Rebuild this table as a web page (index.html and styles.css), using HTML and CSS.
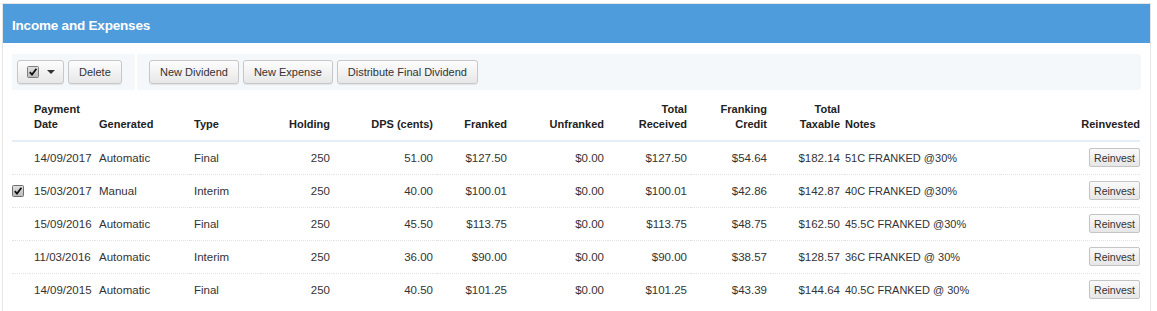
FILE: index.html
```html
<!DOCTYPE html>
<html>
<head>
<meta charset="utf-8">
<link rel="stylesheet" href="styles.css">
</head>
<body>
<div class="panel">
  <div class="panel-heading"><h3 class="panel-title">Income and Expenses</h3></div>
  <div class="panel-body">
    <div class="toolbar">
      <div class="tb-group tb-first">
        <button class="btn btn-check">
          <svg class="cb" width="12" height="12" viewBox="0 0 12 12"><defs><linearGradient id="g1" x1="0" y1="0" x2="0" y2="1"><stop offset="0" stop-color="#e2e2e2"/><stop offset="1" stop-color="#b9b9b9"/></linearGradient></defs><rect x="0.5" y="0.5" width="11" height="11" rx="1" fill="url(#g1)" stroke="#7d7d7d"/><path d="M2.8 6.2 L5 8.6 L9.4 2.8" fill="none" stroke="#111" stroke-width="1.8"/></svg>
          <span class="caret"></span>
        </button>
        <button class="btn">Delete</button>
      </div>
      <div class="tb-sep"></div>
      <div class="tb-group tb-second">
        <button class="btn">New Dividend</button>
        <button class="btn">New Expense</button>
        <button class="btn">Distribute Final Dividend</button>
      </div>
    </div>
    <table class="grid">
      <colgroup>
        <col style="width:18px"><col style="width:65px"><col style="width:95px"><col style="width:70px"><col style="width:74px"><col style="width:103px"><col style="width:74px"><col style="width:97px"><col style="width:83px"><col style="width:80px"><col style="width:73px"><col style="width:156px"><col style="width:140px">
      </colgroup>
      <thead>
        <tr>
          <th class="c-cb"></th>
          <th class="l">Payment<br>Date</th>
          <th class="l">Generated</th>
          <th class="l">Type</th>
          <th class="r">Holding</th>
          <th class="r">DPS (cents)</th>
          <th class="r">Franked</th>
          <th class="r">Unfranked</th>
          <th class="r">Total<br>Received</th>
          <th class="r">Franking<br>Credit</th>
          <th class="r">Total<br>Taxable</th>
          <th class="l notes">Notes</th>
          <th class="r last">Reinvested</th>
        </tr>
      </thead>
      <tbody>
        <tr>
          <td class="c-cb"></td>
          <td>14/09/2017</td><td>Automatic</td><td>Final</td>
          <td class="r">250</td><td class="r">51.00</td><td class="r">$127.50</td><td class="r">$0.00</td><td class="r">$127.50</td><td class="r">$54.64</td><td class="r">$182.14</td>
          <td class="notes">51C FRANKED @30%</td>
          <td class="r last"><button class="btn-sm">Reinvest</button></td>
        </tr>
        <tr>
          <td class="c-cb"><svg class="cb" width="12" height="12" viewBox="0 0 12 12"><defs><linearGradient id="g2" x1="0" y1="0" x2="0" y2="1"><stop offset="0" stop-color="#e2e2e2"/><stop offset="1" stop-color="#b9b9b9"/></linearGradient></defs><rect x="0.5" y="0.5" width="11" height="11" rx="1" fill="url(#g2)" stroke="#6f6f6f"/><path d="M2.8 6.2 L5 8.6 L9.4 2.8" fill="none" stroke="#111" stroke-width="1.8"/></svg></td>
          <td>15/03/2017</td><td>Manual</td><td>Interim</td>
          <td class="r">250</td><td class="r">40.00</td><td class="r">$100.01</td><td class="r">$0.00</td><td class="r">$100.01</td><td class="r">$42.86</td><td class="r">$142.87</td>
          <td class="notes">40C FRANKED @30%</td>
          <td class="r last"><button class="btn-sm">Reinvest</button></td>
        </tr>
        <tr>
          <td class="c-cb"></td>
          <td>15/09/2016</td><td>Automatic</td><td>Final</td>
          <td class="r">250</td><td class="r">45.50</td><td class="r">$113.75</td><td class="r">$0.00</td><td class="r">$113.75</td><td class="r">$48.75</td><td class="r">$162.50</td>
          <td class="notes">45.5C FRANKED @30%</td>
          <td class="r last"><button class="btn-sm">Reinvest</button></td>
        </tr>
        <tr>
          <td class="c-cb"></td>
          <td>11/03/2016</td><td>Automatic</td><td>Interim</td>
          <td class="r">250</td><td class="r">36.00</td><td class="r">$90.00</td><td class="r">$0.00</td><td class="r">$90.00</td><td class="r">$38.57</td><td class="r">$128.57</td>
          <td class="notes">36C FRANKED @ 30%</td>
          <td class="r last"><button class="btn-sm">Reinvest</button></td>
        </tr>
        <tr>
          <td class="c-cb"></td>
          <td>14/09/2015</td><td>Automatic</td><td>Final</td>
          <td class="r">250</td><td class="r">40.50</td><td class="r">$101.25</td><td class="r">$0.00</td><td class="r">$101.25</td><td class="r">$43.39</td><td class="r">$144.64</td>
          <td class="notes">40.5C FRANKED @ 30%</td>
          <td class="r last"><button class="btn-sm">Reinvest</button></td>
        </tr>
      </tbody>
    </table>
  </div>
</div>
</body>
</html>
```

FILE: styles.css
```css
* { box-sizing: border-box; }
html, body { margin: 0; padding: 0; background: #fff; }
body {
  font-family: "Liberation Sans", Arial, sans-serif;
  font-size: 11.5px;
  color: #333;
}
.panel {
  margin: 3px 6px 0 2px;
  border: 1px solid #e6e6e6;
  border-bottom: none;
  min-height: 320px;
}
.panel-heading {
  background: #4f9cdc;
  height: 39px;
  padding: 3px 9px 0 9px;
  display: flex;
  align-items: center;
}
.panel-title {
  margin: 0;
  color: #fff;
  font-size: 13.5px;
  font-weight: bold;
  letter-spacing: -0.2px;
}
.panel-body {
  padding: 10px 9px 0 9px;
}
.toolbar {
  display: flex;
  height: 36px;
  margin-top: 1px;
}
.tb-group {
  display: flex;
  gap: 4px;
  align-items: center;
  background: #f4f8fb;
  height: 36px;
}
.tb-first { width: 123px; padding-left: 5px; }
.tb-sep { width: 2px; background: #fff; }
.tb-second { flex: 1; padding-left: 12px; border-radius: 0 3px 3px 0; }
.btn {
  font-family: inherit;
  font-size: 11px;
  color: #333;
  height: 24px;
  padding: 0 10px;
  border: 1px solid #c8c8c8;
  border-radius: 3px;
  background: linear-gradient(#fdfdfd, #e7e7e7);
  box-shadow: 0 1px 1px rgba(0,0,0,0.08);
  display: inline-flex;
  align-items: center;
}
.btn-check { width: 47px; padding: 0 0 0 9px; gap: 8px; }
.btn-check .cb { display: block; }
.caret {
  width: 0; height: 0;
  border-left: 4px solid transparent;
  border-right: 4px solid transparent;
  border-top: 4px solid #333;
}
.grid {
  border-collapse: collapse;
  table-layout: fixed;
  width: 1128px;
  margin-top: 6px;
}
.grid th {
  font-size: 11px;
  font-weight: bold;
  color: #222;
  line-height: 15px;
  vertical-align: bottom;
  padding: 0 4px 8px 4px;
  height: 45px;
  border-bottom: 2px solid #e4eef8;
  white-space: nowrap;
}
.grid td {
  height: 33px;
  padding: 0 4px;
  vertical-align: middle;
  border-bottom: 1px dotted #e2e2e2;
  white-space: nowrap;
}
.grid tbody tr:last-child td { border-bottom: none; }
.l { text-align: left; }
.r { text-align: right; }
.grid .c-cb { padding: 0; }
.grid td.c-cb .cb { display: block; margin-top: 1px; }
.grid .notes { padding-left: 1px; }
.grid td.notes { font-size: 11px; }
.grid .last { padding-right: 0; }
.btn-sm {
  font-family: inherit;
  font-size: 10.5px;
  color: #333;
  height: 19px;
  width: 51px;
  padding: 0;
  border: 1px solid #c4c4c4;
  border-radius: 2px;
  background: linear-gradient(#fafafa, #e6e6e6);
  vertical-align: middle;
}
```
